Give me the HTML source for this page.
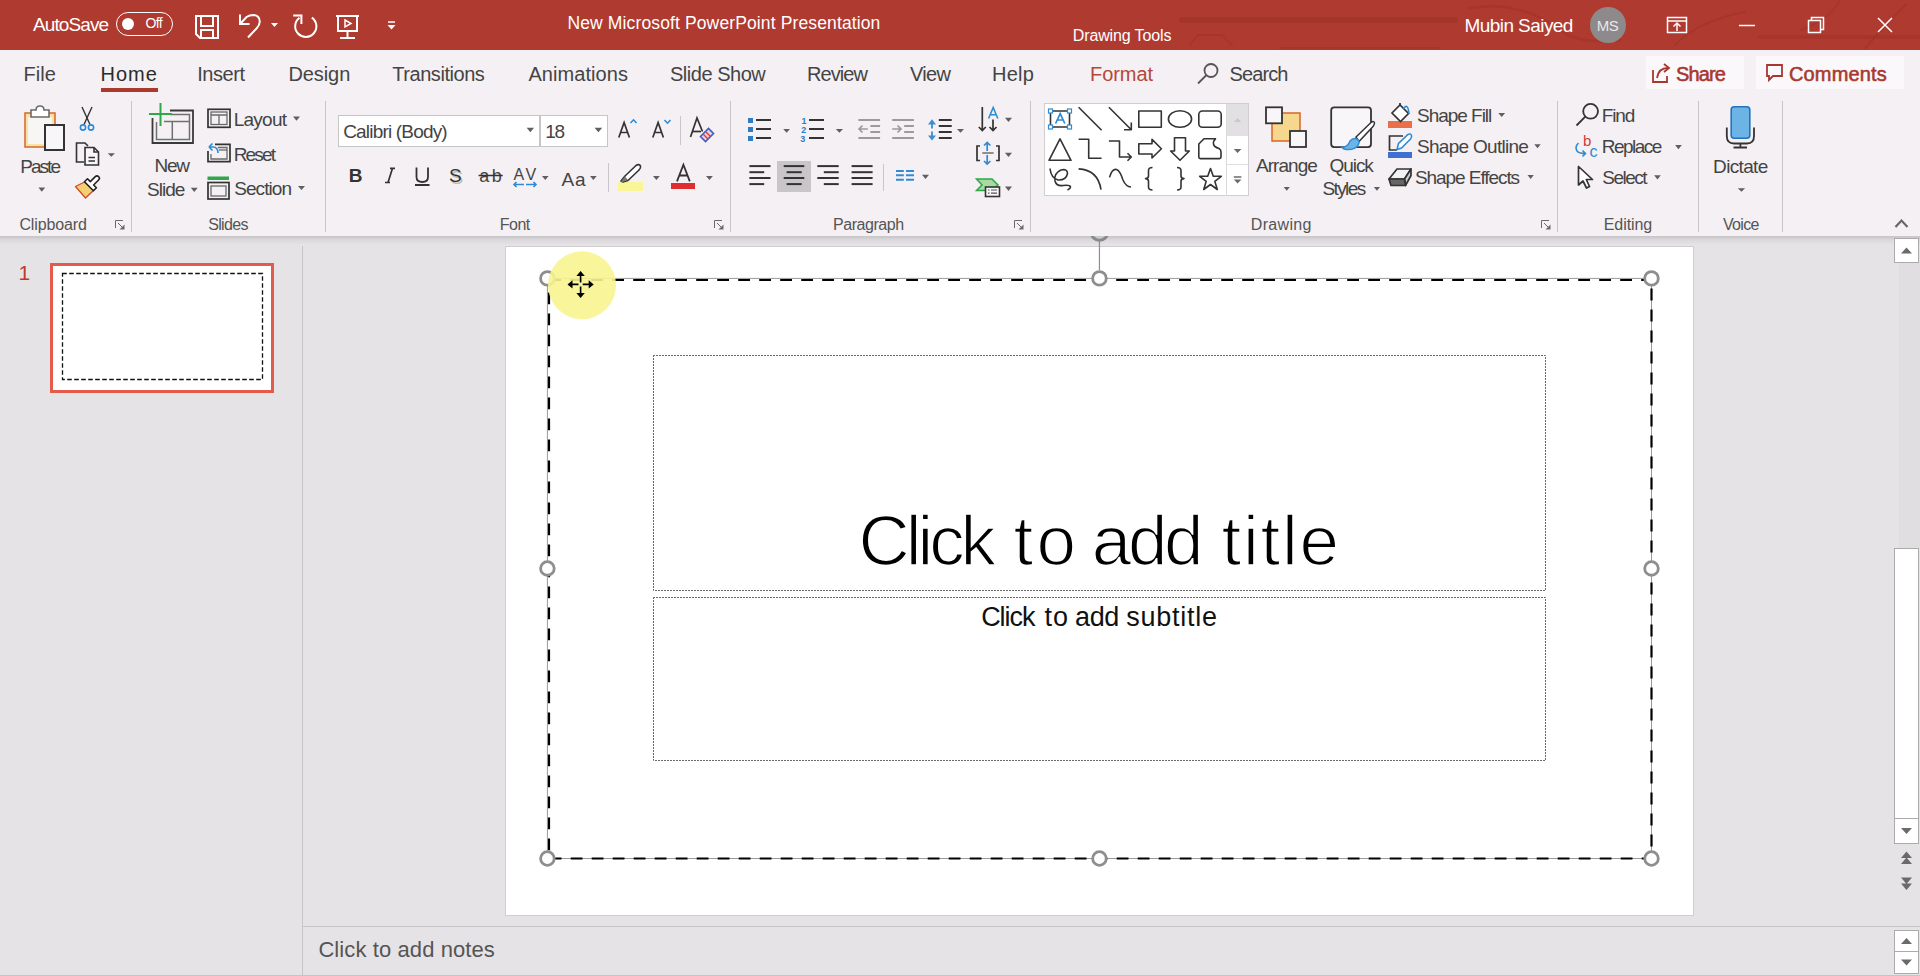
<!DOCTYPE html><html><head><meta charset="utf-8"><style>
html,body{margin:0;padding:0;width:1920px;height:976px;overflow:hidden;background:#E6E3E6;}
#tb{position:absolute;left:0;top:0;width:1920px;height:50px;background:#AF3A30;}
.t{position:absolute;white-space:nowrap;font-family:"Liberation Sans",sans-serif;}
</style></head><body>
<div id="tb"></div><svg style="position:absolute;left:0;top:0" width="1920" height="50" viewBox="0 0 1920 50">
<g fill="none" stroke="#9A3026" stroke-opacity="0.4" stroke-linecap="round"><path d="M1182 20 H1455" stroke-width="6" stroke="#9A3026" stroke-opacity="0.5"/><path d="M1190 45 L1198 35 H1222 L1232 45" stroke-width="2"/><path d="M1280 48 H1440" stroke-width="2"/><path d="M1470 8 Q1520 0 1560 30 Q1580 45 1620 40" stroke-width="2.5"/><path d="M1675 45 Q1700 20 1745 12" stroke-width="2"/><path d="M1760 37 H1920" stroke-width="4"/><path d="M1865 48 L1905 5" stroke-width="2.5"/><path d="M1840 0 Q1830 20 1800 30" stroke-width="2"/></g>
</svg>
<div style="position:absolute;left:0px;top:50px;width:1920px;height:186px;background:#F4F0F3"></div>
<div style="position:absolute;left:0px;top:236px;width:1920px;height:8px;background:linear-gradient(#C9C6C9 0px,#CFCCCF 2px,#D9D6D9 3px,#E4E1E4 8px)"></div>
<div class="t" style="left:33.00px;top:14.53px;font-size:19px;line-height:19px;color:#fff;letter-spacing:-0.900px;">AutoSave</div>
<div style="position:absolute;left:116px;top:12px;width:57px;height:24px;border:1.5px solid #fff;border-radius:12px;box-sizing:border-box"></div>
<div style="position:absolute;left:122px;top:18px;width:12px;height:12px;background:#fff;border-radius:50%"></div>
<div class="t" style="left:145.45px;top:15.53px;font-size:14px;line-height:14px;color:#fff;letter-spacing:-0.575px;">Off</div>
<div class="t" style="left:567.50px;top:14.53px;font-size:17.5px;line-height:17.5px;color:#fff;letter-spacing:0.125px;">New Microsoft PowerPoint Presentation</div>
<div class="t" style="left:1072.75px;top:27.52px;font-size:16px;line-height:16px;color:#fff;letter-spacing:-0.125px;">Drawing Tools</div>
<div class="t" style="left:1464.50px;top:15.53px;font-size:19px;line-height:19px;color:#fff;letter-spacing:-0.568px;">Mubin Saiyed</div>
<div style="position:absolute;left:1590px;top:7px;width:36px;height:36px;background:#8E8A8B;border-radius:50%"></div>
<div class="t" style="left:1596.75px;top:17.52px;font-size:15px;line-height:15px;color:#E8E8E8;letter-spacing:-0.500px;">MS</div>
<div class="t" style="left:23.50px;top:63.52px;font-size:20px;line-height:20px;color:#444444;letter-spacing:0.083px;">File</div>
<div class="t" style="left:100.50px;top:63.52px;font-size:20px;line-height:20px;color:#2B2B2B;letter-spacing:1.000px;">Home</div>
<div class="t" style="left:197.25px;top:63.52px;font-size:20px;line-height:20px;color:#444444;letter-spacing:-0.450px;">Insert</div>
<div class="t" style="left:288.50px;top:63.52px;font-size:20px;line-height:20px;color:#444444;letter-spacing:-0.100px;">Design</div>
<div class="t" style="left:392.30px;top:63.52px;font-size:20px;line-height:20px;color:#444444;letter-spacing:-0.455px;">Transitions</div>
<div class="t" style="left:528.40px;top:63.52px;font-size:20px;line-height:20px;color:#444444;letter-spacing:0.061px;">Animations</div>
<div class="t" style="left:670.00px;top:63.52px;font-size:20px;line-height:20px;color:#444444;letter-spacing:-0.472px;">Slide Show</div>
<div class="t" style="left:807.00px;top:63.52px;font-size:20px;line-height:20px;color:#444444;letter-spacing:-0.950px;">Review</div>
<div class="t" style="left:910.00px;top:63.52px;font-size:20px;line-height:20px;color:#444444;letter-spacing:-0.667px;">View</div>
<div class="t" style="left:992.00px;top:63.52px;font-size:20px;line-height:20px;color:#444444;letter-spacing:0.250px;">Help</div>
<div class="t" style="left:1090.00px;top:63.52px;font-size:20px;line-height:20px;color:#B5473A;letter-spacing:-0.050px;">Format</div>
<div class="t" style="left:1229.50px;top:63.52px;font-size:20px;line-height:20px;color:#444444;letter-spacing:-0.900px;">Search</div>
<div style="position:absolute;left:101px;top:88px;width:57px;height:4px;background:#A93A2C"></div>
<div style="position:absolute;left:1646px;top:56px;width:98px;height:33px;background:#FAF8FA"></div>
<div style="position:absolute;left:1756px;top:56px;width:148px;height:33px;background:#FAF8FA"></div>
<div class="t" style="left:1676.00px;top:63.52px;font-size:20px;line-height:20px;color:#A8382F;letter-spacing:-0.875px;-webkit-text-stroke:0.55px #A8382F;">Share</div>
<div class="t" style="left:1789.00px;top:63.52px;font-size:20px;line-height:20px;color:#A8382F;letter-spacing:0.143px;-webkit-text-stroke:0.55px #A8382F;">Comments</div>
<div style="position:absolute;left:131px;top:101px;width:1px;height:131px;background:#C9C6C9"></div>
<div style="position:absolute;left:325px;top:101px;width:1px;height:131px;background:#C9C6C9"></div>
<div style="position:absolute;left:730px;top:101px;width:1px;height:131px;background:#C9C6C9"></div>
<div style="position:absolute;left:1030px;top:101px;width:1px;height:131px;background:#C9C6C9"></div>
<div style="position:absolute;left:1557px;top:101px;width:1px;height:131px;background:#C9C6C9"></div>
<div style="position:absolute;left:1698px;top:101px;width:1px;height:131px;background:#C9C6C9"></div>
<div style="position:absolute;left:1782px;top:101px;width:1px;height:131px;background:#C9C6C9"></div>
<div class="t" style="left:19.45px;top:216.53px;font-size:16px;line-height:16px;color:#555555;letter-spacing:-0.138px;">Clipboard</div>
<div class="t" style="left:208.25px;top:216.53px;font-size:16px;line-height:16px;color:#555555;letter-spacing:-0.690px;">Slides</div>
<div class="t" style="left:499.75px;top:216.53px;font-size:16px;line-height:16px;color:#555555;letter-spacing:-0.500px;">Font</div>
<div class="t" style="left:832.95px;top:216.53px;font-size:16px;line-height:16px;color:#555555;letter-spacing:-0.438px;">Paragraph</div>
<div class="t" style="left:1250.75px;top:216.53px;font-size:16px;line-height:16px;color:#555555;letter-spacing:0.325px;">Drawing</div>
<div class="t" style="left:1603.75px;top:216.53px;font-size:16px;line-height:16px;color:#555555;letter-spacing:-0.083px;">Editing</div>
<div class="t" style="left:1723.00px;top:216.53px;font-size:16px;line-height:16px;color:#555555;letter-spacing:-0.675px;">Voice</div>
<div class="t" style="left:20.20px;top:156.53px;font-size:19px;line-height:19px;color:#444444;letter-spacing:-1.938px;">Paste</div>
<div class="t" style="left:154.50px;top:155.53px;font-size:19px;line-height:19px;color:#444444;letter-spacing:-1.250px;">New</div>
<div class="t" style="left:147.00px;top:179.53px;font-size:19px;line-height:19px;color:#444444;letter-spacing:-0.975px;">Slide</div>
<div class="t" style="left:233.70px;top:109.53px;font-size:19px;line-height:19px;color:#444444;letter-spacing:-0.740px;">Layout</div>
<div class="t" style="left:233.70px;top:144.53px;font-size:19px;line-height:19px;color:#444444;letter-spacing:-1.850px;">Reset</div>
<div class="t" style="left:234.20px;top:178.53px;font-size:19px;line-height:19px;color:#444444;letter-spacing:-0.933px;">Section</div>
<div style="position:absolute;left:338px;top:115px;width:202px;height:32px;background:#fff;border:1px solid #C6C6C6;box-sizing:border-box"></div>
<div style="position:absolute;left:540px;top:115px;width:68px;height:32px;background:#fff;border:1px solid #C6C6C6;box-sizing:border-box"></div>
<div class="t" style="left:343.20px;top:121.53px;font-size:19px;line-height:19px;color:#444;letter-spacing:-0.815px;">Calibri (Body)</div>
<div class="t" style="left:545.30px;top:121.53px;font-size:19px;line-height:19px;color:#444;letter-spacing:-1.350px;">18</div>
<div style="position:absolute;left:680px;top:116px;width:1px;height:29px;background:#C9C6C9"></div>
<div class="t" style="left:348.75px;top:165.53px;font-size:19px;line-height:19px;color:#333;font-weight:bold;">B</div>
<div class="t" style="left:449.00px;top:165.53px;font-size:19px;line-height:19px;color:#333;text-shadow:1.5px 1.5px 0 #BBB;">S</div>
<div class="t" style="left:479.25px;top:166.53px;font-size:18px;line-height:18px;color:#444;letter-spacing:2.500px;">ab</div>
<div class="t" style="left:513.60px;top:166.53px;font-size:16px;line-height:16px;color:#444;letter-spacing:2.400px;">AV</div>
<div class="t" style="left:561.40px;top:169.53px;font-size:19px;line-height:19px;color:#444;letter-spacing:0.950px;">Aa</div>
<div style="position:absolute;left:608px;top:163px;width:1px;height:29px;background:#C9C6C9"></div>
<div style="position:absolute;left:618px;top:182px;width:25px;height:8.5px;background:#FBF59A"></div>
<div style="position:absolute;left:671px;top:183px;width:24px;height:6px;background:#E02E2E"></div>
<div style="position:absolute;left:748px;top:117.6px;width:5px;height:5px;background:#2E7DC4"></div>
<div style="position:absolute;left:756px;top:119.1px;width:14.5px;height:2px;background:#333"></div>
<div style="position:absolute;left:808.5px;top:119.1px;width:15px;height:2px;background:#333"></div>
<div style="position:absolute;left:748px;top:126.80000000000001px;width:5px;height:5px;background:#2E7DC4"></div>
<div style="position:absolute;left:756px;top:128.3px;width:14.5px;height:2px;background:#333"></div>
<div style="position:absolute;left:808.5px;top:128.3px;width:15px;height:2px;background:#333"></div>
<div style="position:absolute;left:748px;top:135.6px;width:5px;height:5px;background:#2E7DC4"></div>
<div style="position:absolute;left:756px;top:137.1px;width:14.5px;height:2px;background:#333"></div>
<div style="position:absolute;left:808.5px;top:137.1px;width:15px;height:2px;background:#333"></div>
<div class="t" style="left:801.50px;top:116.53px;font-size:9px;line-height:9px;color:#2E7DC4;font-weight:bold;">1</div>
<div class="t" style="left:801.35px;top:125.53px;font-size:9px;line-height:9px;color:#2E7DC4;font-weight:bold;">2</div>
<div class="t" style="left:800.35px;top:134.53px;font-size:9px;line-height:9px;color:#2E7DC4;font-weight:bold;">3</div>
<div style="position:absolute;left:777px;top:161px;width:34px;height:31px;background:#C8C6C8"></div>
<div style="position:absolute;left:883px;top:163.5px;width:1px;height:27.0px;background:#C9C6C9"></div>
<div style="position:absolute;left:1044px;top:103px;width:205px;height:93px;background:#fff;border:1px solid #CFCFCF;box-sizing:border-box"></div>
<div style="position:absolute;left:1227px;top:104px;width:21px;height:31px;background:#E2E0E2"></div>
<div style="position:absolute;left:1226px;top:103px;width:1px;height:93px;background:#DADADA"></div>
<div style="position:absolute;left:1227px;top:135px;width:21px;height:1px;background:#E0E0E0"></div>
<div style="position:absolute;left:1227px;top:164px;width:21px;height:1px;background:#E0E0E0"></div>
<div class="t" style="left:1256.00px;top:155.53px;font-size:19px;line-height:19px;color:#444444;letter-spacing:-0.958px;">Arrange</div>
<div class="t" style="left:1329.60px;top:155.53px;font-size:19px;line-height:19px;color:#444444;letter-spacing:-1.075px;">Quick</div>
<div class="t" style="left:1322.40px;top:178.53px;font-size:19px;line-height:19px;color:#444444;letter-spacing:-1.600px;">Styles</div>
<div style="position:absolute;left:1388px;top:121px;width:24px;height:6.5px;background:#E86F4A"></div>
<div class="t" style="left:1417.00px;top:105.53px;font-size:19px;line-height:19px;color:#444444;letter-spacing:-1.028px;">Shape Fill</div>
<div style="position:absolute;left:1388px;top:152px;width:24px;height:6px;background:#3F6FD1"></div>
<div class="t" style="left:1417.00px;top:136.53px;font-size:19px;line-height:19px;color:#444444;letter-spacing:-0.708px;">Shape Outline</div>
<div class="t" style="left:1415.00px;top:167.53px;font-size:19px;line-height:19px;color:#444444;letter-spacing:-1.071px;">Shape Effects</div>
<div class="t" style="left:1601.70px;top:105.53px;font-size:19px;line-height:19px;color:#444444;letter-spacing:-1.083px;">Find</div>
<div class="t" style="left:1583.00px;top:132.53px;font-size:15px;line-height:15px;color:#D03A3A;">b</div>
<div class="t" style="left:1589.45px;top:143.53px;font-size:16px;line-height:16px;color:#2E8BD4;">c</div>
<div class="t" style="left:1601.70px;top:136.53px;font-size:19px;line-height:19px;color:#444444;letter-spacing:-1.517px;">Replace</div>
<div class="t" style="left:1602.20px;top:167.53px;font-size:19px;line-height:19px;color:#444444;letter-spacing:-1.470px;">Select</div>
<div class="t" style="left:1713.10px;top:156.53px;font-size:19px;line-height:19px;color:#444444;letter-spacing:-0.658px;">Dictate</div>
<div style="position:absolute;left:302px;top:246px;width:1px;height:730px;background:#C6C4C6"></div>
<div style="position:absolute;left:303px;top:926px;width:1617px;height:1px;background:#C6C4C6"></div>
<div style="position:absolute;left:0px;top:975px;width:1920px;height:1px;background:#C6C4C6"></div>
<div style="position:absolute;left:50px;top:263px;width:224px;height:130px;background:#fff;border:3px solid #E25B4D;box-sizing:border-box"></div>
<div class="t" style="left:18.50px;top:261.52px;font-size:21px;line-height:21px;color:#C0392B;">1</div>
<div style="position:absolute;left:506px;top:247px;width:1187px;height:668px;background:#fff;box-shadow:0 0 0 1px #CFCDCF"></div>
<div class="t" style="left:858.50px;top:504.52px;font-size:71px;line-height:71px;color:#000;letter-spacing:-4.062px;-webkit-text-stroke:1.6px #fff;">Click</div>
<div class="t" style="left:1013.40px;top:504.52px;font-size:71px;line-height:71px;color:#000;letter-spacing:3.350px;-webkit-text-stroke:1.6px #fff;">to</div>
<div class="t" style="left:1091.80px;top:504.52px;font-size:71px;line-height:71px;color:#000;letter-spacing:-3.400px;-webkit-text-stroke:1.6px #fff;">add</div>
<div class="t" style="left:1221.60px;top:504.52px;font-size:71px;line-height:71px;color:#000;letter-spacing:1.738px;-webkit-text-stroke:1.6px #fff;">title</div>
<div class="t" style="left:981.15px;top:603.52px;font-size:27px;line-height:27px;color:#111;letter-spacing:-1.062px;">Click</div>
<div class="t" style="left:1044.50px;top:603.52px;font-size:27px;line-height:27px;color:#111;letter-spacing:1.000px;">to</div>
<div class="t" style="left:1074.95px;top:603.52px;font-size:27px;line-height:27px;color:#111;letter-spacing:-0.300px;">add</div>
<div class="t" style="left:1126.25px;top:603.52px;font-size:27px;line-height:27px;color:#111;letter-spacing:0.757px;">subtitle</div>
<div class="t" style="left:318.40px;top:938.52px;font-size:22px;line-height:22px;color:#555;letter-spacing:0.094px;">Click to add notes</div>
<div style="position:absolute;left:1899px;top:262px;width:21px;height:286px;background:#E1DEE1"></div>
<div style="position:absolute;left:1894px;top:238px;width:25px;height:25px;background:#fff;border:1px solid #ABABAB;box-sizing:border-box"></div>
<div style="position:absolute;left:1894px;top:548px;width:25px;height:271px;background:#fff;border:1px solid #ABABAB;box-sizing:border-box"></div>
<div style="position:absolute;left:1894px;top:818px;width:25px;height:26px;background:#fff;border:1px solid #ABABAB;box-sizing:border-box"></div>
<div style="position:absolute;left:1894px;top:930px;width:25px;height:22px;background:#fff;border:1px solid #ABABAB;box-sizing:border-box"></div>
<div style="position:absolute;left:1894px;top:951px;width:25px;height:23px;background:#fff;border:1px solid #ABABAB;box-sizing:border-box"></div>
<svg style="position:absolute;left:0;top:0" width="1920" height="976" viewBox="0 0 1920 976">
<g fill="none" stroke="#FFFFFF" stroke-width="2"><path d="M196 16 H218 V38 H200 L196 34 Z"/><path d="M201 16 V26 H213 V16"/><path d="M201 38 V30 H213 V38"/></g>
<g fill="none" stroke="#FFFFFF" stroke-width="2"><path d="M240 14.5 V24 H249.5"/><path d="M240.5 23.5 L246.5 17 Q249.5 15 253.5 15 Q259.5 15.5 259.8 21.5 Q259.8 25 256.5 28.5 L248 37.5"/></g>
<path d="M271 23 H278 L274.5 27 Z" fill="#FFFFFF"/>
<g fill="none" stroke="#FFFFFF" stroke-width="2"><path d="M311.8 17.6 A10.6 10.6 0 1 1 299.5 17.8"/><path d="M293.2 15.6 H301.4 V24"/></g>
<g fill="none" stroke="#FFFFFF" stroke-width="2"><path d="M336 16 H359"/><path d="M338 16 V31 H357 V16"/><path d="M347.5 31 V37"/><path d="M340 38 H355"/></g><path d="M345 20 L351 23.5 L345 27 Z" fill="none" stroke="#fff" stroke-width="1.5"/>
<path d="M388 22 H395" stroke="#FFFFFF" stroke-width="1.5"/><path d="M387.5 25 H395.5 L391.5 29.5 Z" fill="#FFFFFF"/>
<g fill="none" stroke="#FFFFFF" stroke-width="1.5"><rect x="1667.5" y="17.5" width="19" height="15"/><path d="M1667.5 21 H1686.5"/><path d="M1677 31 V23"/><path d="M1673.5 26.5 L1677 23 L1680.5 26.5"/><path d="M1739 25.5 H1755"/><rect x="1808.5" y="20.5" width="12" height="12"/><path d="M1811.5 20.5 V17.5 H1823.5 V29.5 H1820.5"/><path d="M1878 18 L1892 32 M1892 18 L1878 32"/></g>
<g fill="none" stroke="#555" stroke-width="1.8"><circle cx="1211" cy="70.5" r="6.5"/><path d="M1206.5 75 L1198 83.5"/></g>
<g fill="none" stroke="#A8382F" stroke-width="1.8"><path d="M1653 70 V82 H1667 V76"/><path d="M1657 78 C1658 71 1662 68 1668 68"/><path d="M1664 64 L1669 68 L1664 72"/></g>
<g fill="none" stroke="#A8382F" stroke-width="1.8"><path d="M1767 65 H1782 V76 H1773 L1769 80 V76 H1767 Z"/></g>
<g fill="none" stroke="#6A6A6A" stroke-width="1"><path d="M115.5 228 V220.5 H123"/><path d="M118 223 L123.5 228.5"/></g><path d="M124.5 224.5 V229.5 H119.5 Z" fill="#6A6A6A"/>
<g fill="none" stroke="#6A6A6A" stroke-width="1"><path d="M714.5 228 V220.5 H722"/><path d="M717 223 L722.5 228.5"/></g><path d="M723.5 224.5 V229.5 H718.5 Z" fill="#6A6A6A"/>
<g fill="none" stroke="#6A6A6A" stroke-width="1"><path d="M1014.5 228 V220.5 H1022"/><path d="M1017 223 L1022.5 228.5"/></g><path d="M1023.5 224.5 V229.5 H1018.5 Z" fill="#6A6A6A"/>
<g fill="none" stroke="#6A6A6A" stroke-width="1"><path d="M1541.5 228 V220.5 H1549"/><path d="M1544 223 L1549.5 228.5"/></g><path d="M1550.5 224.5 V229.5 H1545.5 Z" fill="#6A6A6A"/>
<path d="M1895.5 227 L1901.5 220.5 L1907.5 227" fill="none" stroke="#666" stroke-width="2.2"/>
<rect x="25" y="113" width="30" height="34" fill="#F7E3A8" stroke="#D9652B" stroke-width="1.5"/>
<rect x="28" y="117" width="24" height="27" fill="#F8F5F5"/>
<path d="M31 117 V110 H36 Q36 106 40 106 Q44 106 44 110 H49 V117 Z" fill="#fff" stroke="#6B6B6B" stroke-width="1.6"/>
<rect x="45" y="125" width="19" height="25" fill="#F8F6F8" stroke="#333" stroke-width="2"/>
<path d="M38.4 187.6 H45.2 L41.8 191.7 Z" fill="#5F5F5F"/>
<g fill="none" stroke="#333" stroke-width="1.4"><path d="M82 107 L90 124.5"/><path d="M92 107 L84 124.5"/></g>
<g fill="none" stroke="#2E8BD4" stroke-width="1.6"><circle cx="83" cy="127.5" r="2.6"/><circle cx="91" cy="127.5" r="2.6"/></g>
<g fill="none" stroke="#333" stroke-width="1.6"><path d="M84 162 H76.5 V143 H85 L88 146"/><path d="M85 147.5 H94 L98.5 152 V165 H85 Z" fill="#F8F6F8"/><path d="M94 147.5 V152 H98.5"/><path d="M88.5 157.5 H95 M88.5 161 H95" stroke-width="1.3"/></g>
<path d="M107.7 153.3 H114.9 L111.30000000000001 156.8 Z" fill="#5F5F5F"/>
<path d="M84.5 182 L75.5 186.5 L85.5 198 L94 190 Z" fill="#F5D070" stroke="#D04A2A" stroke-width="1.3" stroke-linejoin="round"/>
<path d="M84.5 181.8 L87.5 178.8 L90.3 181.6 L95.3 176.6 Q97 175 98.7 176.7 Q100.3 178.4 98.6 180 L93.6 185 L96.4 187.8 L93.4 190.8 Z" fill="#fff" stroke="#222" stroke-width="1.6" stroke-linejoin="round"/>
<g fill="none" stroke="#3A3A3A" stroke-width="1.8"><path d="M152.5 118 V143 H193 V110.5 H170"/></g>
<g fill="none" stroke="#707070" stroke-width="1.5"><path d="M156.5 122 V139.5 H189.5 V114.5 H170"/><path d="M164 121.5 H189.5 M172.3 121.5 V139.5"/></g>
<g stroke="#2EA84A" stroke-width="2"><path d="M160.5 103 V126 M149 114 H172"/></g>
<path d="M190.8 187.8 H197.7 L194.25 192 Z" fill="#5F5F5F"/>
<g fill="none" stroke="#333" stroke-width="1.7"><rect x="208" y="109.3" width="22" height="18"/></g><g fill="none" stroke="#6A6A6A" stroke-width="1.3"><rect x="211" y="112" width="16" height="12.5"/><path d="M211 115 H227 M219 115 V124.5"/></g>
<path d="M293 116.5 H300 L296.5 120.8 Z" fill="#5F5F5F"/>
<g fill="none" stroke="#333" stroke-width="1.7"><path d="M215 144.3 H230 V161.7 H208 V151"/></g><g fill="none" stroke="#6A6A6A" stroke-width="1.3"><path d="M218 147.5 H227 V159 H211 V154"/><path d="M219 150 H227"/></g>
<g fill="none" stroke="#2E8BD4" stroke-width="1.6"><path d="M209 147 L212.5 143.5 M209 147 L212.5 150.5 M209.5 147 H213 Q218 147 218 153"/></g>
<rect x="207.5" y="176.5" width="21.5" height="3.5" fill="#2EA84A"/>
<g fill="none" stroke="#333" stroke-width="1.7"><rect x="208" y="182.5" width="21" height="16.5"/></g><rect x="211" y="186" width="15" height="10" fill="none" stroke="#6A6A6A" stroke-width="1.3"/>
<path d="M298 186 H305 L301.5 190 Z" fill="#5F5F5F"/>
<path d="M526.7 127.8 H534 L530.35 132.2 Z" fill="#5F5F5F"/>
<path d="M594.6 127.8 H602.2 L598.4000000000001 132.2 Z" fill="#5F5F5F"/>
<g fill="none" stroke="#333" stroke-width="1.7"><path d="M618.8 137.5 L624.1 122.5 L629.4 137.5 M620.6 132.5 H627.6"/><path d="M652.8 137.5 L658.1 122.5 L663.4 137.5 M654.6 132.5 H661.6"/><path d="M690.5 137 L697 118 L702.5 131.5"/><path d="M692.5 131.5 H701"/></g>
<g fill="none" stroke="#2E8BD4" stroke-width="1.6"><path d="M630.5 123 L633.5 119.8 L636.5 123"/><path d="M664.5 120 L667.5 123.2 L670.5 120"/></g>
<path d="M700.5 136.5 L708.5 128.5 L713.5 133.5 L705.5 141.5 Z" fill="#E8D0E0" stroke="#3B5FC8" stroke-width="1.6"/><path d="M703 134 L708 139 M705.5 131.5 L710.5 136.5" stroke="#D8403A" stroke-width="1.4"/>
<path d="M385 182.5 H390 M390 168.3 H395 M392.5 168.3 L388 182.5" fill="none" stroke="#333" stroke-width="1.7"/>
<path d="M416.5 167.5 V177 Q416.5 182 422.3 182 Q428 182 428 177 V167.5 M415 185 H429.5" fill="none" stroke="#333" stroke-width="1.8"/>
<path d="M478.6 175.5 H502.7" stroke="#333" stroke-width="1.5"/>
<g fill="none" stroke="#2E8BD4" stroke-width="1.6"><path d="M514 184.5 H524 M516.5 182 L514 184.5 L516.5 187 M526 184.5 H536 M533.5 182 L536 184.5 L533.5 187"/></g>
<path d="M542 176 H548.6 L545.3 180 Z" fill="#5F5F5F"/>
<path d="M590 176 H596.7 L593.35 180 Z" fill="#5F5F5F"/>
<path d="M621 181 L625 176 L636 165.5 Q639 163.5 640.5 166 Q641 168.5 639 170 L628 180.5 L623 182 Z" fill="#fff" stroke="#333" stroke-width="1.6" stroke-linejoin="round"/><path d="M621 181.5 L625 176.5 L628 180 L623 182 Z" fill="#777"/>
<path d="M653 176 H659.8 L656.4 180 Z" fill="#5F5F5F"/>
<path d="M677 181.4 L683.4 164.8 L689.8 181.4 M679.5 175.5 H687.3" fill="none" stroke="#333" stroke-width="1.8"/>
<path d="M706 176 H712.9 L709.45 180 Z" fill="#5F5F5F"/>
<path d="M783.2 128.9 H790 L786.6 132.8 Z" fill="#5F5F5F"/>
<path d="M835.8 128.9 H843 L839.4 132.8 Z" fill="#5F5F5F"/>
<g stroke="#9B9B9B" stroke-width="2"><path d="M858.4 120 H880.1 M858.4 138 H880.1"/><path d="M870.4 126 H880.1 M870.4 132 H880.1"/></g>
<g stroke="#9B9B9B" stroke-width="2"><path d="M892.2 120 H913.9000000000001 M892.2 138 H913.9000000000001"/><path d="M904.2 126 H913.9000000000001 M904.2 132 H913.9000000000001"/></g>
<g fill="none" stroke="#9B9B9B" stroke-width="1.7"><path d="M867.8 129 H859 M862.5 125.5 L859 129 L862.5 132.5"/><path d="M892.2 129 H901 M897.5 125.5 L901 129 L897.5 132.5"/></g>
<g stroke="#333" stroke-width="2"><path d="M938.8 120 H951.7 M938.8 126 H951.7 M938.8 132 H951.7 M938.8 138 H951.7"/></g>
<g fill="#3B8ED0"><path d="M932 119.2 L936 124.5 H928 Z M932 140.5 L936 135.5 H928 Z"/></g><path d="M932 124 V128.5 M932 131.5 V136" stroke="#3B8ED0" stroke-width="1.8"/>
<path d="M957 129 H964 L960.5 132.8 Z" fill="#5F5F5F"/>
<g fill="none" stroke="#333" stroke-width="1.7"><path d="M982.3 107 V130.5 M978.8 127 L982.3 130.5 L985.8 127"/><path d="M993 119.5 V130.5 M989.5 127 L993 130.5 L996.5 127"/></g>
<path d="M988.6 118.5 L993.2 107.5 L997.8 118.5 M990.2 114.8 H996.2" fill="none" stroke="#2E8BD4" stroke-width="1.6"/>
<path d="M1005 117.8 H1012 L1008.5 122 Z" fill="#5F5F5F"/>
<g fill="none" stroke="#333" stroke-width="1.7"><path d="M980 146 H977 V160.5 H980 M996 146 H999 V160.5 H996"/></g><path d="M982.3 153 H993.6" stroke="#777" stroke-width="1.6"/>
<g fill="none" stroke="#2E8BD4" stroke-width="1.7"><path d="M987.2 142.5 V151 M984 145.5 L987.2 142.5 L990.4 145.5 M987.2 155 V164 M984 161 L987.2 164 L990.4 161"/></g>
<path d="M1005 152.7 H1012 L1008.5 157 Z" fill="#5F5F5F"/>
<path d="M976.5 179 H992 L998 185 L992 190.5 H976.5 L982 185 Z" fill="#A9D8A0" stroke="#2EA84A" stroke-width="1.5"/>
<rect x="985.5" y="187" width="14" height="9.5" fill="#F8F6F8" stroke="#333" stroke-width="1.6"/><path d="M988 190 H989.5 M991 190 H997 M988 193.2 H989.5 M991 193.2 H997" stroke="#555" stroke-width="1.2"/>
<path d="M1005 186.6 H1012 L1008.5 191 Z" fill="#5F5F5F"/>
<g stroke="#333" stroke-width="2"><path d="M749.4 166.1 H770.5"/><path d="M749.4 172.2 H764.2"/><path d="M749.4 178 H770.5"/><path d="M749.4 184.1 H764.2"/></g>
<g stroke="#333" stroke-width="2"><path d="M783.7 166.1 H804.3"/><path d="M786.6 172.2 H801.7"/><path d="M783.7 178 H804.3"/><path d="M786.6 184.1 H801.7"/></g>
<g stroke="#333" stroke-width="2"><path d="M817.3 166.1 H838.7"/><path d="M823.8 172.2 H838.7"/><path d="M817.3 178 H838.7"/><path d="M823.8 184.1 H838.7"/></g>
<g stroke="#333" stroke-width="2"><path d="M851.6 166.1 H872.6"/><path d="M851.6 172.2 H872.6"/><path d="M851.6 178 H872.6"/><path d="M851.6 184.1 H872.6"/></g>
<g stroke="#2E8BD4" stroke-width="2"><path d="M896 171 H903.8 M906 171 H914 M896 175.3 H903.8 M906 175.3 H914 M896 179.8 H903.8 M906 179.8 H914"/></g>
<path d="M922 174.8 H929 L925.5 179 Z" fill="#5F5F5F"/>
<path d="M1234 122 L1237.6 118 L1241.2 122 Z" fill="#C9C9C9"/>
<path d="M1233.8 149 H1241.4 L1237.6 153 Z" fill="#6A6A6A"/>
<path d="M1233.8 177 H1241.4" stroke="#6A6A6A" stroke-width="1.5"/><path d="M1233.8 179.5 H1241.4 L1237.6 183.5 Z" fill="#6A6A6A"/>
<g fill="none" stroke="#333" stroke-width="1.6" stroke-linejoin="round"><rect x="1050.5" y="111" width="19" height="16"/><path d="M1078.6 107.3 L1101.6 130.2"/><path d="M1108.9 107.3 L1131.3 129.7 M1131.3 122.5 V129.7 H1124"/><rect x="1138.8" y="111" width="22.5" height="16.3"/><ellipse cx="1180" cy="119" rx="11.6" ry="8.3"/><rect x="1198.8" y="111" width="22.4" height="16.3" rx="3.5"/><path d="M1060 138.8 L1071 160.3 H1049 Z"/><path d="M1078.6 139.2 H1088.7 V158.2 H1101.6"/><path d="M1108.9 141 H1119.5 V157 H1131.3 M1127.5 153.3 L1131.3 157 L1127.5 160.7"/><path d="M1138.8 143.7 H1152 V139.4 L1161.4 148.7 L1152 158 V154 H1138.8 Z"/><path d="M1174.5 137.8 H1185.5 V151 H1189.3 L1180 160.3 L1170.6 151 H1174.5 Z"/><path d="M1204 138.8 H1215.5 Q1213 141 1213.5 144 Q1214 147 1219 148.5 Q1221 149.5 1221 152 V157 Q1221 158.6 1219.5 158.6 H1200.3 Q1198.8 158.6 1198.8 157 V144 Z"/><path d="M1050 168.5 Q1051 178 1058 180 Q1066 180.5 1067.5 173.5 Q1067.5 168.5 1061 170 Q1053.5 173.5 1055 181 Q1056.5 186.5 1063 185.5 Q1070 184.5 1070.5 187 Q1070.5 188.5 1067.5 190"/><path d="M1078.6 168.9 Q1098 170 1101 189.6"/><path d="M1109.5 177.4 Q1112 168.5 1116.5 169.5 Q1120 170.5 1123 180 Q1126 186.8 1131 187"/><path d="M1152.5 167.5 Q1148.5 167.5 1148.5 170.5 V176 Q1148.5 178.6 1145.5 178.6 Q1148.5 178.6 1148.5 181.5 V187 Q1148.5 190 1152.5 190"/><path d="M1177 167.5 Q1181 167.5 1181 170.5 V176 Q1181 178.6 1184 178.6 Q1181 178.6 1181 181.5 V187 Q1181 190 1177 190"/><path d="M1210.5 168.5 L1213.3 176.3 H1221.3 L1214.8 181.3 L1217.3 189.5 L1210.5 184.5 L1203.7 189.5 L1206.2 181.3 L1199.7 176.3 H1207.7 Z"/></g>
<g fill="#fff" stroke="#2E8BD4" stroke-width="1.2"><rect x="1048.5" y="109" width="4" height="4"/><rect x="1067.5" y="109" width="4" height="4"/><rect x="1048.5" y="125" width="4" height="4"/><rect x="1067.5" y="125" width="4" height="4"/></g>
<path d="M1055.6 123.5 L1060.2 113.6 L1064.8 123.5 M1057.2 120 H1063.2" fill="none" stroke="#2E8BD4" stroke-width="1.7"/>
<rect x="1272" y="113" width="28" height="28" fill="#F5D78E" stroke="#D9652B" stroke-width="1.5"/>
<rect x="1266" y="107.3" width="16" height="16" fill="#F8F6F8" stroke="#333" stroke-width="1.8"/>
<rect x="1290" y="131" width="16" height="16" fill="#F8F6F8" stroke="#333" stroke-width="1.8"/>
<path d="M1283.7 186.9 H1289.8 L1286.75 190.7 Z" fill="#5F5F5F"/>
<rect x="1331.2" y="107.3" width="39.8" height="39.8" rx="3" fill="#F8F6F8" stroke="#333" stroke-width="1.8"/>
<path d="M1356 137 L1371 122.5 Q1374 120.5 1374.5 123 Q1374.5 124.5 1373 126.5 L1359 141.5 Z" fill="#fff" stroke="#333" stroke-width="1.5"/>
<path d="M1342 147.5 Q1348 147 1350 141 Q1353 137.5 1357 139 Q1361 141.5 1357.5 146 Q1353 151 1344 149 Z" fill="#6DB4E6" stroke="#2E8BD4" stroke-width="1.4"/>
<path d="M1373.9 186.9 H1380 L1376.95 190.7 Z" fill="#5F5F5F"/>
<path d="M1392 113 L1400 105 L1408.5 113.5 L1400.5 121.5 Z" fill="#fff" stroke="#333" stroke-width="1.7"/><path d="M1400 105 V103" stroke="#333" stroke-width="1.7"/><path d="M1403 109 Q1408 102 1409 114" fill="none" stroke="#2E8BD4" stroke-width="1.6"/>
<path d="M1498.3 113.1 H1505.1 L1501.6999999999998 117 Z" fill="#5F5F5F"/>
<path d="M1403 136 H1389.5 V150 H1397" fill="none" stroke="#333" stroke-width="1.7"/><path d="M1397 149.5 L1398.5 143.5 L1408 134.5 Q1410.5 133 1411.5 135.5 Q1412 137 1410.5 139 L1401.5 148 Z" fill="#fff" stroke="#2E8BD4" stroke-width="1.6"/>
<path d="M1534.3 144.3 H1540.7 L1537.5 148.2 Z" fill="#5F5F5F"/>
<path d="M1389 179 L1397 169 H1411 L1404.5 179 Z" fill="#F2F2F2" stroke="#333" stroke-width="1.7" stroke-linejoin="round"/><path d="M1404.5 179 L1411 169 V175.5 L1405.5 185.5 Z" fill="#CFCFCF" stroke="#333" stroke-width="1.7" stroke-linejoin="round"/><path d="M1389 179 H1404.5 L1405.5 185.5 H1391 Z" fill="#666" stroke="#333" stroke-width="1.7" stroke-linejoin="round"/>
<path d="M1527.5 175 H1533.8 L1530.65 178.9 Z" fill="#5F5F5F"/>
<g fill="none" stroke="#333" stroke-width="1.8"><circle cx="1590.6" cy="111.3" r="7.4"/><path d="M1585.3 116.6 L1576.5 125.5"/></g>
<path d="M1578.5 143 Q1574.5 147 1577 151 Q1579 153.5 1585 153.5 M1582.5 150.5 L1585.5 153.5 L1582.5 156.5" fill="none" stroke="#2E8BD4" stroke-width="1.6"/>
<path d="M1675.1 145.1 H1681.8 L1678.4499999999998 149.2 Z" fill="#5F5F5F"/>
<path d="M1578.5 166.5 V185 L1583 181 L1586.5 188 L1589.5 186.5 L1586.3 179.5 H1592.5 Z" fill="#fff" stroke="#333" stroke-width="1.7" stroke-linejoin="round"/>
<path d="M1654.1 175.3 H1660.8 L1657.4499999999998 179.4 Z" fill="#5F5F5F"/>
<path d="M1726.8 127.5 V136 Q1726.8 143.5 1734 143.5 H1747 Q1754 143.5 1754 136 V127.5" fill="none" stroke="#333" stroke-width="1.8"/><path d="M1740.4 143.5 V147.5 M1733.5 147.5 H1747" stroke="#333" stroke-width="1.8"/>
<rect x="1731.2" y="106.8" width="18.6" height="31.4" rx="3" fill="#6DB4E6" stroke="#2671BD" stroke-width="1.6"/>
<path d="M1737.8 188.2 H1745.1 L1741.4499999999998 191.8 Z" fill="#5F5F5F"/>
<rect x="62.5" y="273.5" width="200" height="106" fill="none" stroke="#111" stroke-width="1.3" stroke-dasharray="4.6 2.4" stroke-dashoffset="0.3"/>
<g fill="none" stroke="#686868" stroke-width="1" stroke-dasharray="2 1" stroke-dashoffset="0.5"><rect x="653.5" y="355.5" width="892" height="235"/><rect x="653.5" y="597.5" width="892" height="163"/></g>
<path d="M1901.0 253.5 L1906.5 247.5 L1912.0 253.5 Z" fill="#6A6A6A"/>
<path d="M1901.0 828.0 L1906.5 834.0 L1912.0 828.0 Z" fill="#6A6A6A"/>
<g fill="#6A6A6A"><path d="M1901 858 L1906.5 851.5 L1912 858 Z M1901 864 L1906.5 857.5 L1912 864 Z"/><path d="M1901 877.5 L1906.5 884 L1912 877.5 Z M1901 883.5 L1906.5 890 L1912 883.5 Z"/></g>
<path d="M1901.0 944.0 L1906.5 938.0 L1912.0 944.0 Z" fill="#6A6A6A"/>
<path d="M1901.0 959.5 L1906.5 965.5 L1912.0 959.5 Z" fill="#6A6A6A"/>
<rect x="547.4" y="278.4" width="1104.1" height="580.1" fill="none" stroke="#9A9A9A" stroke-width="1"/>
<g stroke="#000" stroke-width="2.2" stroke-dasharray="11.8 9.2"><path d="M547.4 280 H1651.5" stroke-dashoffset="19.2"/><path d="M547.4 858.5 H1651.5" stroke-dashoffset="18.7"/><path d="M549 278.4 V858.5" stroke-dashoffset="7"/><path d="M1651.5 278.4 V858.5" stroke-dashoffset="10.8"/></g>
<path d="M1099.45 240 V270" stroke="#8E8E8E" stroke-width="1.2"/>
<defs><clipPath id="cr"><rect x="1000" y="236" width="200" height="20"/></clipPath></defs><circle cx="1099.45" cy="232" r="8.3" fill="none" stroke="#8A8A8A" stroke-width="3" clip-path="url(#cr)"/>
<circle cx="547.4" cy="278.4" r="6.8" fill="#fff" stroke="#8E8E8E" stroke-width="2.8"/>
<circle cx="1099.45" cy="278.4" r="6.8" fill="#fff" stroke="#8E8E8E" stroke-width="2.8"/>
<circle cx="1651.5" cy="278.4" r="6.8" fill="#fff" stroke="#8E8E8E" stroke-width="2.8"/>
<circle cx="547.4" cy="568.45" r="6.8" fill="#fff" stroke="#8E8E8E" stroke-width="2.8"/>
<circle cx="1651.5" cy="568.45" r="6.8" fill="#fff" stroke="#8E8E8E" stroke-width="2.8"/>
<circle cx="547.4" cy="858.5" r="6.8" fill="#fff" stroke="#8E8E8E" stroke-width="2.8"/>
<circle cx="1099.45" cy="858.5" r="6.8" fill="#fff" stroke="#8E8E8E" stroke-width="2.8"/>
<circle cx="1651.5" cy="858.5" r="6.8" fill="#fff" stroke="#8E8E8E" stroke-width="2.8"/>
<circle cx="582" cy="285.3" r="34" fill="#F7F490" fill-opacity="0.9"/>
<g fill="#000"><path d="M580.6 271 L584.8 276 H581.4 V282.5 H579.8 V276 H576.4 Z"/><path d="M580.6 298 L584.8 293 H581.4 V286.5 H579.8 V293 H576.4 Z"/><path d="M567.5 284.4 L572.5 280.2 V283.6 H578.5 V285.2 H572.5 V288.6 Z"/><path d="M593.7 284.4 L588.7 280.2 V283.6 H582.7 V285.2 H588.7 V288.6 Z"/></g>
</svg>
</body></html>
